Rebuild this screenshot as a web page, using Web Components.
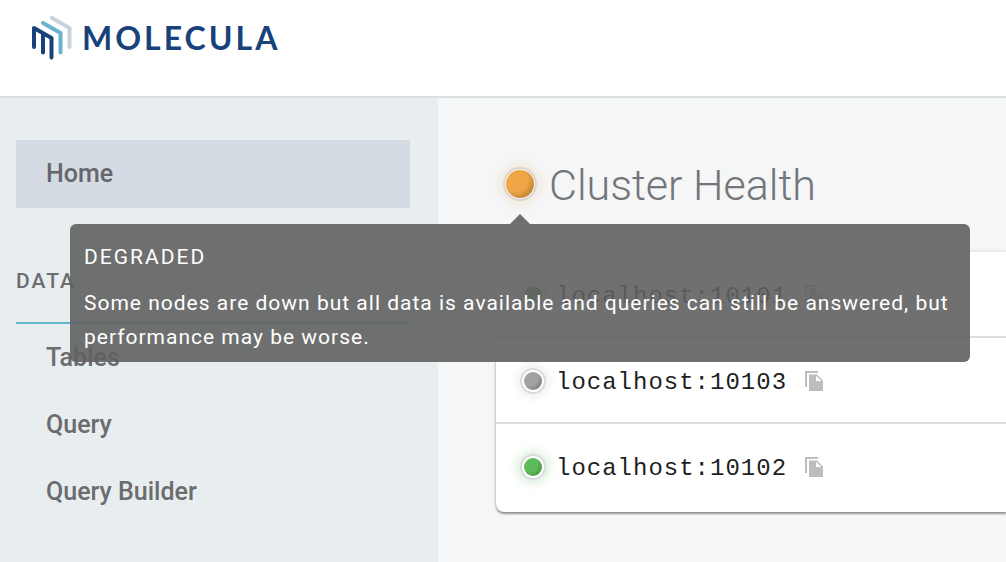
<!DOCTYPE html>
<html lang="en">
<head>
<meta charset="utf-8">
<title>Molecula</title>
<style>
  body { margin: 0; font-family: Roboto, sans-serif; background: #f5f6f8; color: #6b6c6e; overflow-x: hidden; }
</style>
</head>
<body>
<mol-app>
  <mol-header slot="header"></mol-header>
  <mol-sidebar slot="sidebar">
    <mol-nav-item active>Home</mol-nav-item>
    <mol-nav-section heading="DATA">
      <mol-nav-item>Tables</mol-nav-item>
      <mol-nav-item>Query</mol-nav-item>
      <mol-nav-item>Query Builder</mol-nav-item>
    </mol-nav-section>
  </mol-sidebar>
  <mol-cluster>
    <mol-tooltip slot="status" heading="DEGRADED">
      <mol-led slot="target" size="large" status="degraded"></mol-led>
      Some nodes are down but all data is available and queries can still be answered, but performance may be worse.
    </mol-tooltip>
    <span slot="title">Cluster Health</span>
    <mol-node status="up">localhost:10101</mol-node>
    <mol-node status="down">localhost:10103</mol-node>
    <mol-node status="up">localhost:10102</mol-node>
  </mol-cluster>
</mol-app>

<script>
const define = (name, html) => customElements.define(name, class extends HTMLElement {
  constructor() {
    super();
    this.attachShadow({ mode: 'open' }).innerHTML = html(this);
  }
});

define('mol-app', () => `
  <style>
    :host { display: flex; flex-direction: column; min-height: 100vh; }
    .body { display: flex; flex: 1; }
    main { flex: 1; min-width: 0; }
  </style>
  <slot name="header"></slot>
  <div class="body"><slot name="sidebar"></slot><main><slot></slot></main></div>`);

define('mol-header', () => `
  <style>
    :host { display: block; background: #fff; border-bottom: 2px solid #dcdfe0; }
    header { display: flex; padding: 16px 32px 36px; align-items: center; }
    a { display: flex; align-items: center; gap: 10px; color: #17427a; text-decoration: none;
        font: 700 32px/44px Lato, sans-serif; letter-spacing: 3px; }
    svg { display: block; }
  </style>
  <header>
    <a href="#">
      <svg width="40" height="44" viewBox="0 0 40 44" fill="none" stroke-width="4" stroke-linecap="round" stroke-linejoin="round" aria-hidden="true">
        <path stroke="#c8d2dc" d="M20 2 37.500 12V31"/>
        <path stroke="#68b4cc" d="M11 7 28.500 17V36.500"/>
        <path stroke="#17427a" d="M2 31V12L19.500 22V41.500M11 18V36.500"/>
      </svg>
      <span>MOLECULA</span>
    </a>
  </header>`);

define('mol-sidebar', () => `
  <style>
    :host { display: block; flex: 0 0 438px; box-sizing: border-box; background: #e8edf0; padding: 42px 28px 36px 16px; }
  </style>
  <nav><slot></slot></nav>`);

define('mol-nav-item', () => `
  <style>
    :host { display: block; font-size: 25px; font-weight: 500; }
    a { display: block; padding: 0 30px; line-height: 67px; color: #6b6c6e; text-decoration: none; }
    :host([active]) a { background: #d4dbe3; line-height: 68px; color: #65676b; }
  </style>
  <a href="#"><slot></slot></a>`);

define('mol-nav-section', el => `
  <style>
    :host { display: block; padding-top: 56px; }
    h2 { margin: 0; padding-bottom: 24px; border-bottom: 2px solid #62b5cb; font-size: 21px; line-height: 34px; font-weight: 500; letter-spacing: 2px; }
  </style>
  <h2>${el.getAttribute('heading')}</h2>
  <slot></slot>`);

define('mol-led', () => `
  <style>
    :host { --c: #5cbb58; --d: #37803a; --glow: #4fb24f38; display: block; box-sizing: border-box; width: 26px; height: 26px;
      padding: 2px; border: 2px solid #d9dbda; border-radius: 50%; box-shadow: 0 0 10px 3px var(--glow); }
    i { display: block; height: 100%; border-radius: 50%; background: radial-gradient(circle at 35% 35%, var(--c) 45%, var(--d) 100%); }
    :host([status=down]) { --c: #a2a2a2; --d: #636363; --glow: #00000012; }
    :host([status=degraded]) { --c: #f0a646; --d: #a06c28; --glow: #f0a64630; border-color: #dcd6d0; }
    :host([size=large]) { width: 34px; height: 34px; padding: 1px; }
  </style>
  <i></i>`);

define('mol-tooltip', el => `
  <style>
    :host { display: block; position: relative; --bg: rgba(97, 97, 97, .9); }
    .tip { position: absolute; z-index: 10; top: 57px; left: 50%; transform: translateX(-50%); box-sizing: border-box;
      width: 900px; padding: 16px 14px 8px; border-radius: 6px; background: var(--bg); color: #fff;
      font-size: 21px; line-height: 34px; letter-spacing: 1px; }
    .tip::before { content: ""; position: absolute; left: 50%; bottom: 100%; margin-left: -10px;
      border: 10px solid transparent; border-top: 0; border-bottom-color: var(--bg); }
    h3 { margin: 0 0 12px; font: inherit; letter-spacing: 2px; }
    p { margin: 0; }
  </style>
  <slot name="target"></slot>
  <div class="tip" role="tooltip"><h3>${el.getAttribute('heading')}</h3><p><slot></slot></p></div>`);

define('mol-cluster', () => `
  <style>
    :host { display: block; padding: 54px 0 48px 58px; }
    .head { display: flex; align-items: center; gap: 12px; padding: 0 0 36px 7px; }
    h1 { margin: 0; padding-top: 2px; font-size: 43px; line-height: 62px; font-weight: 300; color: #747577; }
    .card { padding-bottom: 2px; background: #fff; border-radius: 8px 0 0 8px; box-shadow: 0 2px 2px #00000060, 0 0 4px #00000020; }
  </style>
  <div class="head"><slot name="status"></slot><h1><slot name="title"></slot></h1></div>
  <section class="card"><slot></slot></section>`);

define('mol-node', el => `
  <style>
    :host { display: flex; align-items: center; box-sizing: border-box; height: 86px; padding: 2px 24px 0; border-bottom: 2px solid #dcdcdc;
      color: #1f1f1f; font: 24px/32px "Liberation Mono", monospace; letter-spacing: 1px; }
    :host(:last-of-type) { border-bottom-color: transparent; }
    span { padding-top: 4px; margin: 0 18px 0 10px; }
    button { padding: 0; border: 0; background: none; }
    svg { display: block; }
  </style>
  <mol-led status="${el.getAttribute('status')}"></mol-led>
  <span><slot></slot></span>
  <button aria-label="Copy address">
    <svg width="18" height="20" viewBox="0 0 18 20" fill="#bdbdbd" aria-hidden="true">
      <path d="M0 0H13V2H2V16H0Z"/>
      <path fill-rule="evenodd" d="M4 3.500H12L18 9.500V20H4ZM11 4.800V10H16.500Z"/>
    </svg>
  </button>`);
</script>
</body>
</html>
